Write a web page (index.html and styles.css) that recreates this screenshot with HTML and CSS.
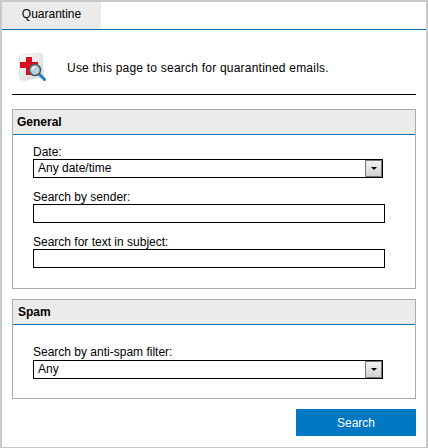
FILE: index.html
```html
<!DOCTYPE html>
<html lang="en">
<head>
<meta charset="utf-8">
<title>Quarantine</title>
<link rel="stylesheet" href="styles.css">
</head>
<body>
<div class="frame">
  <nav class="tabs"><div class="tab">Quarantine</div></nav>
  <div class="content">
    <header class="intro">
      <svg class="intro-icon" width="30" height="32" viewBox="0 0 30 32" aria-hidden="true">
        <defs>
          <linearGradient id="paper" x1="0" y1="0" x2="1" y2="1"><stop offset="0" stop-color="#fbfbfb"/><stop offset="1" stop-color="#d8d8d8"/></linearGradient>
        </defs>
        <path d="M1 3 L20 1 Q25 1 25 5 L26 25 L6 29 Q1 28 1 25 Z" fill="#c4c4c4" opacity=".55"/>
        <path d="M2 3 L21 2 Q24 3 24 5 L25 24 L4 27 Q2 26 2 24 Z" fill="url(#paper)"/>
        <path d="M8 5 H14 V10 H20 V16 H14 V23 H8 V16 H2 V10 H8 Z" fill="#d8101c"/>
        <path d="M21.500 22.500 L26.500 27.500" stroke="#1e7fc4" stroke-width="3" stroke-linecap="round"/>
        <circle cx="17" cy="18" r="5.500" fill="#b9d3e3" stroke="#4d5a63" stroke-width="1.600"/>
        <path d="M14 17 Q15 15 17.500 15" stroke="#fff" stroke-width="1.200" fill="none"/>
      </svg>
      <p class="intro-text">Use this page to search for quarantined emails.</p>
    </header>
    <section class="panel general">
      <h2 class="panel-title">General</h2>
      <div class="panel-body">
        <div class="field">
          <label class="field-label">Date:</label>
          <div class="select"><span class="select-value">Any date/time</span><span class="select-btn"><i class="arrow"></i></span></div>
        </div>
        <div class="field">
          <label class="field-label">Search by sender:</label>
          <input class="input" type="text">
        </div>
        <div class="field">
          <label class="field-label">Search for text in subject:</label>
          <input class="input" type="text">
        </div>
      </div>
    </section>
    <section class="panel spam">
      <h2 class="panel-title">Spam</h2>
      <div class="panel-body">
        <div class="field">
          <label class="field-label">Search by anti-spam filter:</label>
          <div class="select"><span class="select-value">Any</span><span class="select-btn"><i class="arrow"></i></span></div>
        </div>
      </div>
    </section>
    <div class="actions"><button class="search-btn" type="button">Search</button></div>
  </div>
</div>
</body>
</html>
```

FILE: styles.css
```css
* { box-sizing: border-box; }
html, body { margin: 0; padding: 0; }
body {
  width: 428px;
  height: 448px;
  background: #fff;
  color: #000;
  font-family: "Liberation Sans", Arial, sans-serif;
  font-size: 12px;
  overflow: hidden;
}
.frame {
  width: 428px;
  height: 448px;
  border: 2px solid #c8c8c8;
  border-width: 2px 2px 1px 2px;
}
.tabs {
  height: 28px;
  border-bottom: 1px solid #0d72b5;
}
.tab {
  width: 99px;
  height: 27px;
  background: #ebebeb;
  line-height: 25px;
  text-align: center;
  font-size: 12px;
}
.content { padding: 0 10px; }
.intro {
  height: 65px;
  border-bottom: 1px solid #000;
  display: flex;
  align-items: center;
  padding: 12px 0 0 6px;
}
.intro-icon { flex: none; margin: 0 19px 0 0; }
.intro-text { margin: 0 0 1px; letter-spacing: .22px; }
.panel {
  border: 1px solid #acacac;
}
.general { margin-top: 14px; height: 180px; }
.spam { margin-top: 10px; height: 100px; }
.panel-title {
  margin: 0;
  height: 25px;
  padding-left: 4px;
  background: #ebebeb;
  border-bottom: 1px solid #0d72b5;
  font-size: 12px;
  font-weight: bold;
  line-height: 24px;
}
.spam .panel-title { padding-left: 5px; }
.panel-body {
  display: flex;
  flex-direction: column;
  gap: 11px;
  padding: 10px 30px 0 20px;
}
.spam .panel-body { padding-top: 20px; }
.field { display: flex; flex-direction: column; }
.field-label { height: 15px; line-height: 16px; }
.general .field:first-child .field-label { height: 14px; line-height: 15px; }
.spam .field-label { line-height: 15px; }
.select {
  width: 350px;
  height: 19px;
  border: 1px solid #000;
  display: flex;
  align-items: stretch;
  justify-content: space-between;
  background: #fff;
}
.select-value { padding-left: 4px; line-height: 17px; font-size: 12px; }
.select-btn {
  width: 17px;
  background: linear-gradient(#f2f2f2, #d2d2d2);
  border: 1px solid #777;
  display: flex;
  align-items: center;
  justify-content: center;
}
.arrow {
  width: 0;
  height: 0;
  border: 3px solid transparent;
  border-top-color: #000;
  border-bottom-width: 0;
}
.input {
  display: block;
  width: 352px;
  height: 19px;
  border: 1px solid #000;
  background: #fff;
  padding: 0 4px;
  margin: 0;
  border-radius: 0;
  outline: none;
}
.actions {
  display: flex;
  justify-content: flex-end;
  margin-top: 10px;
}
.search-btn {
  width: 120px;
  height: 27px;
  border: 0;
  margin: 0;
  padding: 0;
  background: #0078c2;
  color: #fff;
  font-family: inherit;
  font-size: 12px;
}
```
